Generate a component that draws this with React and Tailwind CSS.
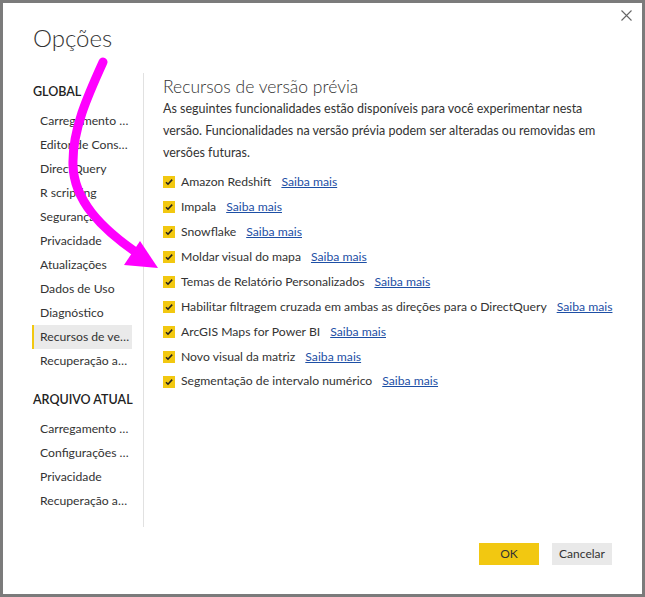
import React from "react";

const globalItems = [
  "Carregamento de Dados",
  "Editor de Consultas",
  "DirectQuery",
  "R scripting",
  "Segurança",
  "Privacidade",
  "Atualizações",
  "Dados de Uso",
  "Diagnóstico",
  "Recursos de versão prévia",
  "Recuperação automática",
];
const fileItems = [
  "Carregamento de Dados",
  "Configurações regionais",
  "Privacidade",
  "Recuperação automática",
];
const features = [
  "Amazon Redshift",
  "Impala",
  "Snowflake",
  "Moldar visual do mapa",
  "Temas de Relatório Personalizados",
  "Habilitar filtragem cruzada em ambas as direções para o DirectQuery",
  "ArcGIS Maps for Power BI",
  "Novo visual da matriz",
  "Segmentação de intervalo numérico",
];

function SideItem({ label, active }) {
  return (
    <div
      className={
        "h-[24px] w-[100px] flex items-center pl-[6px] pr-[2px] border-l-2 " +
        (active ? "bg-[#eaeaea] border-[#f2c811]" : "border-transparent")
      }
    >
      <span className="truncate text-[12.2px] text-[#333]">{label}</span>
    </div>
  );
}

function Check() {
  return (
    <span className="w-[12px] h-[12px] bg-[#f2c811] flex items-center justify-center shrink-0">
      <svg width="10" height="10" viewBox="0 0 10 10">
        <path d="M2 5.2 L4 7.2 L8.2 2.6" fill="none" stroke="#252423" strokeWidth="1.6" />
      </svg>
    </span>
  );
}

export default function App() {
  return (
    <div className="relative w-[645px] h-[597px] box-border border-[3px] border-[#7b7b7b] bg-white font-['Lato',sans-serif] text-[#333] overflow-hidden">
      <svg className="absolute left-[618px] top-[7px]" width="11" height="11" viewBox="0 0 11 11">
        <path d="M0.5 0.5 L10.5 10.5 M10.5 0.5 L0.5 10.5" stroke="#666" strokeWidth="1.1" />
      </svg>

      <div className="pt-[19px] pl-[30px] h-[70px]">
        <h1 className="text-[24px] leading-[32px] font-light text-[#333]">Opções</h1>
      </div>

      <div className="flex h-[454px]">
        <div className="w-[140px] shrink-0 pl-[29px] pt-[7px] flex flex-col">
          <div className="h-[24px] flex items-center pl-[1px] text-[12.5px] font-semibold text-[#222] whitespace-nowrap">GLOBAL</div>
          <div className="mt-[5px] flex flex-col">
            {globalItems.map((l) => (
              <SideItem key={l} label={l} active={l === "Recursos de versão prévia"} />
            ))}
          </div>
          <div className="mt-[15px] h-[24px] flex items-center pl-[1px] text-[12.5px] font-semibold text-[#222] whitespace-nowrap">ARQUIVO ATUAL</div>
          <div className="mt-[5px] flex flex-col">
            {fileItems.map((l) => (
              <SideItem key={l} label={l} />
            ))}
          </div>
        </div>
        <div className="w-px shrink-0 bg-[#e1e1e1]" />
        <div className="pl-[19px] pt-[3px] flex-1 min-w-0">
          <h2 className="text-[17.5px] leading-[22px] font-light text-[#333]">Recursos de versão prévia</h2>
          <p className="mt-[0px] text-[12.5px] leading-[22px] w-[440px]">
            As seguintes funcionalidades estão disponíveis para você experimentar nesta versão. Funcionalidades na versão prévia podem ser alteradas ou removidas em versões futuras.
          </p>
          <div className="mt-[6px] flex flex-col">
            {features.map((f) => (
              <div key={f} className="h-[24.9px] flex items-center">
                <Check />
                <span className="ml-[6px] text-[12.2px] whitespace-nowrap">{f}</span>
                <a className="ml-[10px] text-[12.2px] text-[#1d4fa5] underline whitespace-nowrap">Saiba mais</a>
              </div>
            ))}
          </div>
        </div>
      </div>

      <div className="mt-[16px] pr-[30px] flex justify-end gap-[13px]">
        <button className="w-[60px] h-[22px] bg-[#f2c811] text-[12px] text-[#333]">OK</button>
        <button className="w-[60px] h-[22px] bg-[#e9e9e9] text-[12px] text-[#333]">Cancelar</button>
      </div>

      <svg className="absolute left-[-3px] top-[-3px] pointer-events-none" width="645" height="597" viewBox="0 0 645 597">
        <path d="M103 62 C 88 95 72 130 73 165 C 74 200 100 228 140 255" fill="none" stroke="#ff00ff" strokeWidth="9" strokeLinecap="round" />
        <polygon points="158,268 140,241 124,265" fill="#ff00ff" />
      </svg>
    </div>
  );
}
